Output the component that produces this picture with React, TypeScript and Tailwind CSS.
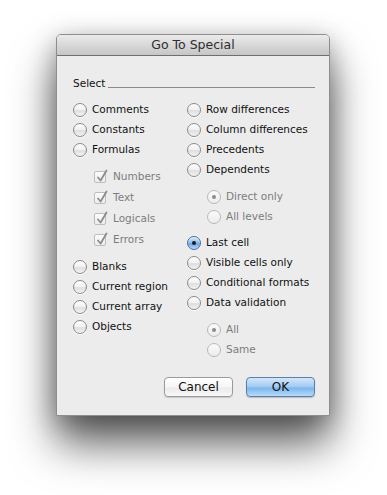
import React from "react";

const font = { fontFamily: '"DejaVu Sans", "Lucida Grande", sans-serif' };

function Radio({ on = false, disabled = false }: { on?: boolean; disabled?: boolean }) {
  let cls =
    "relative flex items-center justify-center w-[14px] h-[14px] rounded-full border shrink-0 ";
  if (on && !disabled) {
    cls +=
      "border-[#4a6d98] bg-[linear-gradient(#d5e8fa,#8dbdee_50%,#6aa6e6_55%,#b9dcf8)] shadow-[inset_0_1px_1px_rgba(255,255,255,0.6)]";
  } else if (disabled) {
    cls += "border-[#b9b9b9] bg-[linear-gradient(#fbfbfb,#ececec)]";
  } else {
    cls +=
      "border-[#8a8a8a] bg-[linear-gradient(#ffffff,#f0f0f0_50%,#dedede_55%,#f4f4f4)] shadow-[0_1px_0_rgba(255,255,255,0.7)]";
  }
  return (
    <span className={cls}>
      {on && (
        <span
          className={
            "w-[4px] h-[4px] rounded-full " + (disabled ? "bg-[#8c8c8c]" : "bg-[#1c1c1c]")
          }
        />
      )}
    </span>
  );
}

function Check() {
  return (
    <span className="relative w-[12px] h-[12px] shrink-0 border border-[#bdbdbd] rounded-[2px] bg-[linear-gradient(#fcfcfc,#ececec)]">
      <svg
        className="absolute left-[1px] top-[-3px]"
        width="12"
        height="14"
        viewBox="0 0 12 14"
      >
        <path
          d="M2 8.5 L4.6 11.5 L10.5 1.5"
          fill="none"
          stroke="#8d8d8d"
          strokeWidth="1.8"
          strokeLinecap="round"
          strokeLinejoin="round"
        />
      </svg>
    </span>
  );
}

function RadioRow({
  label,
  on,
  disabled,
  sub,
}: {
  label: string;
  on?: boolean;
  disabled?: boolean;
  sub?: boolean;
}) {
  return (
    <div className={"flex items-center h-[20px] gap-[5px] " + (sub ? "pl-[20px] gap-[4px]" : "")}>
      <Radio on={on} disabled={disabled} />
      <span className={disabled ? "text-[#7d7d7d]" : "text-[#111]"}>{label}</span>
    </div>
  );
}

function CheckRow({ label }: { label: string }) {
  return (
    <div className="flex items-center h-[21px] gap-[7px] pl-[21px]">
      <Check />
      <span className="text-[#7d7d7d]">{label}</span>
    </div>
  );
}

export default function App() {
  return (
    <div className="w-[387px] h-[495px] bg-white pt-[34px] pl-[56px]" style={font}>
      <div className="flex flex-col w-[274px] h-[382px] border border-[#8e8e8e] rounded-t-[5px] bg-[#ececec] shadow-[0_28px_44px_rgba(0,0,0,0.62),0_6px_26px_rgba(0,0,0,0.28)]">
        <div className="h-[21px] shrink-0 border-b border-[#6f6f6f] rounded-t-[4px] bg-[linear-gradient(#ebebeb,#d4d4d4_60%,#c6c6c6)] flex items-center justify-center text-[12.5px] text-[#2e2e2e]">
          Go To Special
        </div>
        <div className="flex flex-col flex-1 pl-[16px] pr-[14px] pb-[18px] text-[10.5px]">
          <div className="flex items-center h-[16px] mt-[20px] gap-[3px]">
            <span className="text-[#111]">Select</span>
            <span className="flex-1 h-px bg-[#8a8a8a] mt-[6px]" />
          </div>
          <div className="flex mt-[8px]">
            <div className="flex flex-col w-[114px]">
              <RadioRow label="Comments" />
              <RadioRow label="Constants" />
              <RadioRow label="Formulas" />
              <div className="flex flex-col mt-[6px]">
                <CheckRow label="Numbers" />
                <CheckRow label="Text" />
                <CheckRow label="Logicals" />
                <CheckRow label="Errors" />
              </div>
              <div className="flex flex-col mt-[7px]">
                <RadioRow label="Blanks" />
                <RadioRow label="Current region" />
                <RadioRow label="Current array" />
                <RadioRow label="Objects" />
              </div>
            </div>
            <div className="flex flex-col">
              <RadioRow label="Row differences" />
              <RadioRow label="Column differences" />
              <RadioRow label="Precedents" />
              <RadioRow label="Dependents" />
              <div className="flex flex-col mt-[7px]">
                <RadioRow label="Direct only" on disabled sub />
                <RadioRow label="All levels" disabled sub />
              </div>
              <div className="flex flex-col mt-[6px]">
                <RadioRow label="Last cell" on />
                <RadioRow label="Visible cells only" />
                <RadioRow label="Conditional formats" />
                <RadioRow label="Data validation" />
              </div>
              <div className="flex flex-col mt-[7px]">
                <RadioRow label="All" on disabled sub />
                <RadioRow label="Same" disabled sub />
              </div>
            </div>
          </div>
          <div className="flex justify-end gap-[13px] mt-auto">
            <button className="w-[69px] h-[20px] rounded-[4px] border border-[#9a9a9a] bg-[linear-gradient(#ffffff,#f6f6f6_50%,#ebebeb_55%,#f8f8f8)] text-[12px] text-[#111] shadow-[0_1px_1px_rgba(0,0,0,0.15)]">
              Cancel
            </button>
            <button className="w-[69px] h-[20px] rounded-[4px] border border-[#5d7ea9] bg-[linear-gradient(#d3e7fa,#9ecaf2_50%,#7cb5ec_55%,#b5dbfa)] text-[12px] text-[#111] shadow-[0_1px_1px_rgba(0,0,0,0.2)]">
              OK
            </button>
          </div>
        </div>
      </div>
    </div>
  );
}
